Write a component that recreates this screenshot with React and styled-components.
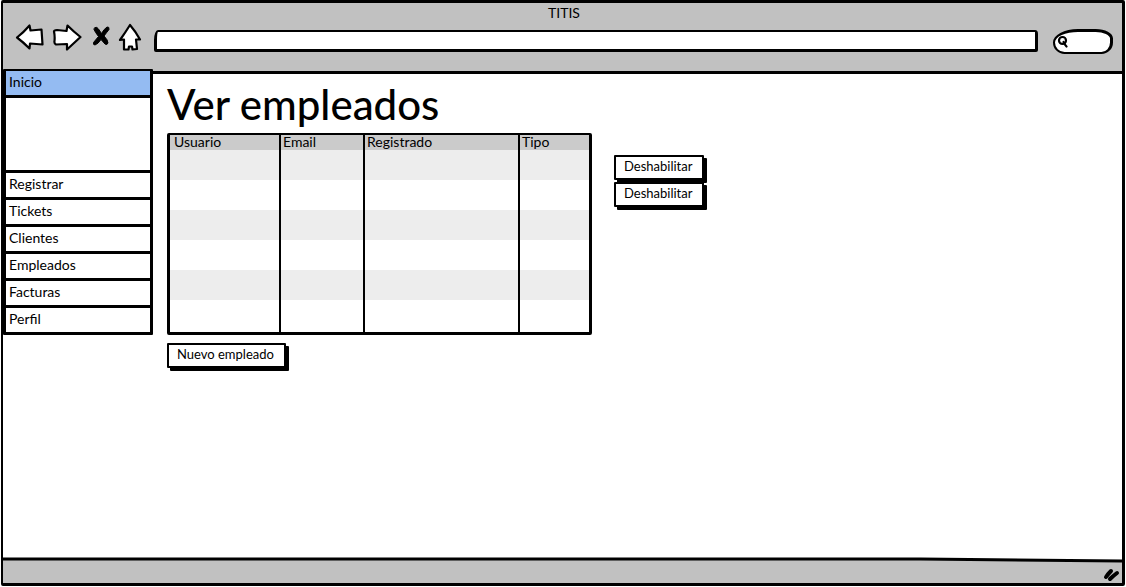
import React from "react";
import styled, { createGlobalStyle } from "styled-components";

const GlobalStyle = createGlobalStyle`
  *, *::before, *::after { box-sizing: border-box; }
  body {
    margin: 0;
    background: #fff;
    color: #000;
    font-family: Lato, "Noto Sans", sans-serif;
    font-size: 14px;
    line-height: 16px;
  }
  button, input { font: inherit; color: inherit; }
`;

const Frame = styled.div`
  display: flex;
  flex-direction: column;
  min-height: calc(100vh - 1px);
  margin: 0 1px 1px;
  border: 3px solid #000;
  border-left-width: 2px;
  border-radius: 2px;
`;

const Header = styled.header`
  padding: 2px 9px 18px 12px;
  background: #c1c1c1;
  border-bottom: 3px solid #000;
`;

const WindowTitle = styled.div`
  text-align: center;
`;

const Toolbar = styled.div`
  display: flex;
  align-items: center;
  height: 32px;
`;

const NavButtons = styled.div`
  display: flex;
  align-items: center;
  gap: 7px;
  margin-right: 12px;
`;

const IconButton = styled.button`
  display: flex;
  padding: 0;
  border: 0;
  background: none;
`;

const AddressBar = styled.input`
  flex: 1;
  min-width: 0;
  height: 22px;
  margin: 8px 15px 0 0;
  padding: 0 8px;
  background: #fff;
  border: 3px solid #000;
  border-width: 2px 3px 3px;
  border-radius: 4px 3px 2px 2px / 10px 4px 2px 2px;
`;

const SearchBox = styled.label`
  display: flex;
  align-items: center;
  width: 60px;
  height: 25px;
  margin-top: 8px;
  padding-left: 2px;
  background: #fff;
  border: 2px solid #000;
  border-width: 3px 3px 2px 2px;
  border-radius: 26px 18px 12px 12px / 14px 10px 12px 12px;
`;

const SearchInput = styled.input`
  flex: 1;
  min-width: 0;
  height: 16px;
  padding: 0;
  border: 0;
  outline: 0;
  background: none;
`;

const Body = styled.div`
  display: flex;
  flex: 1;
  align-items: flex-start;
`;

const Sidebar = styled.nav`
  flex: none;
  width: 150px;
  margin-top: -5px;
  background: #fff;
  border: 3px solid #000;
  border-top-width: 2px;
  border-radius: 1px;
`;

const NavLink = styled.a`
  display: block;
  height: 27px;
  padding: 3px;
  background: ${(p) => (p.$active ? "#94bbf2" : "#fff")};
  border-bottom: 3px solid #000;
  color: inherit;
  text-decoration: none;

  &:last-child {
    height: 24px;
    border-bottom: 0;
  }
`;

const SidebarGap = styled.div`
  height: 75px;
  border-bottom: 3px solid #000;
`;

const Main = styled.main`
  display: flex;
  align-items: flex-start;
  flex: 1;
  gap: 22px;
  padding: 6px 16px 16px 14px;
`;

const Employees = styled.section`
  width: 425px;
`;

const Title = styled.h1`
  margin: 0 0 5px;
  font-size: 42px;
  font-weight: 500;
  line-height: 48px;
  white-space: nowrap;
`;

const Table = styled.table`
  width: 100%;
  margin-bottom: 8px;
  table-layout: fixed;
  border: 3px solid #000;
  border-top-width: 2px;
  border-radius: 2px;
  border-spacing: 0;
`;

const HeadCell = styled.th`
  height: 15px;
  padding: 0 2px;
  background: #cbcbcb;
  font-weight: 400;
  line-height: 14px;
  text-align: left;
  vertical-align: top;

  &:first-child { padding-left: 4px; }
  & + & { border-left: 2px solid #000; }
`;

const Cell = styled.td`
  height: 30px;
  padding: 0 2px;

  & + & { border-left: 2px solid #000; }
`;

const Row = styled.tr`
  &:nth-child(odd) { background: #ededed; }
  &:last-child ${Cell} { height: 32px; }
`;

const Actions = styled.div`
  display: flex;
  flex-direction: column;
  gap: 2px;
  padding-top: 75px;
`;

const Button = styled.button`
  display: block;
  height: 25px;
  padding: 0 10px 4px 8px;
  background: #fff;
  border: 2px solid #000;
  border-radius: 1px;
  box-shadow: 3px 3px 0 #000;
  font-size: 13px;
  line-height: 16px;
  white-space: nowrap;
`;

const Footer = styled.footer`
  position: relative;
  display: flex;
  align-items: flex-end;
  justify-content: flex-end;
  height: 24px;
  padding: 0 2px;
  background: #c1c1c1;
`;

const FooterEdge = styled.svg`
  position: absolute;
  top: -2px;
  left: 0;
  width: 100%;
  height: 8px;
`;

const Drawing = ({ width, height, children }) => (
  <svg
    width={width}
    height={height}
    viewBox={`0 0 ${width} ${height}`}
    fill="#fff"
    stroke="#000"
    strokeWidth="2.2"
    strokeLinejoin="round"
    strokeLinecap="round"
    aria-hidden="true"
  >
    {children}
  </svg>
);

const links = ["Registrar", "Tickets", "Clientes", "Empleados", "Facturas", "Perfil"];
const columns = [
  { name: "Usuario", width: 109 },
  { name: "Email", width: 84 },
  { name: "Registrado", width: 155 },
  { name: "Tipo", width: 71 },
];
const rows = [1, 2, 3, 4, 5, 6];

const Column = styled.col`
  width: ${(p) => p.$width}px;
`;

export default function App() {
  return (
    <>
      <GlobalStyle />
      <Frame>
        <Header>
          <WindowTitle>TITIS</WindowTitle>
          <Toolbar>
            <NavButtons>
              <IconButton type="button" aria-label="Atrás">
                <Drawing width={30} height={28}>
                  <path d="M2 14.5 Q9 9 14.5 2.5 L15.5 7.5 L26.5 6.5 L27.5 21.5 L15 20.5 L14.5 25.5 Q8 19 2 14.5Z" />
                </Drawing>
              </IconButton>
              <IconButton type="button" aria-label="Adelante">
                <Drawing width={30} height={28}>
                  <path d="M2 8.5 Q2 7 5 7 L14.5 8 L15.5 2.5 Q22 9 28.5 14 Q22 20 15 26.5 L15 21 L4 21.5 Q2 20.5 2.5 18 Q3 13 2 8.5Z" />
                </Drawing>
              </IconButton>
              <IconButton type="button" aria-label="Detener">
                <Drawing width={22} height={28}>
                  <path fill="#000" strokeWidth="1" d="M6 4.5 Q8 3.5 9.5 6 L12.5 10.5 Q15 6 18 4 Q20.5 3.5 20 6.5 Q18 9 15 13 Q19 17 19 20 Q18 22.5 16 21 L12 16.5 Q9 21 6 22 Q4 22 4.5 19.5 L9.5 13.5 Q6 9 5 6.5Z" />
                </Drawing>
              </IconButton>
              <IconButton type="button" aria-label="Inicio">
                <Drawing width={24} height={28}>
                  <path d="M12 2 Q18 9 22 16.5 L18 16.5 L19 26 L14.5 26.5 L14 23.5 L11 23.5 L10.5 26.5 L6 26.5 L6 16.5 L2 17 Q7 10 12 2Z" />
                </Drawing>
              </IconButton>
            </NavButtons>
            <AddressBar type="text" aria-label="Dirección" />
            <SearchBox>
              <Drawing width={12} height={13}>
                <circle cx="5.5" cy="5.5" r="3.5" />
                <path fill="none" d="M6.5 7 Q8 10 9.5 11.5" />
              </Drawing>
              <SearchInput type="text" aria-label="Buscar" />
            </SearchBox>
          </Toolbar>
        </Header>
        <Body>
          <Sidebar>
            <NavLink href="#inicio" $active>Inicio</NavLink>
            <SidebarGap />
            {links.map((link) => (
              <NavLink key={link} href={`#${link.toLowerCase()}`}>{link}</NavLink>
            ))}
          </Sidebar>
          <Main>
            <Employees>
              <Title>Ver empleados</Title>
              <Table>
                <colgroup>
                  {columns.map((c) => <Column key={c.name} $width={c.width} />)}
                </colgroup>
                <thead>
                  <tr>
                    {columns.map((c) => <HeadCell key={c.name} scope="col">{c.name}</HeadCell>)}
                  </tr>
                </thead>
                <tbody>
                  {rows.map((r) => (
                    <Row key={r}>
                      {columns.map((c) => <Cell key={c.name} />)}
                    </Row>
                  ))}
                </tbody>
              </Table>
              <Button type="button">Nuevo empleado</Button>
            </Employees>
            <Actions>
              <Button type="button">Deshabilitar</Button>
              <Button type="button">Deshabilitar</Button>
            </Actions>
          </Main>
        </Body>
        <Footer>
          <FooterEdge viewBox="0 0 1000 8" preserveAspectRatio="none" aria-hidden="true">
            <path d="M0 0 H1000 V4 L900 2 H0Z" fill="#fff" />
            <path
              d="M0 2 H820 L1000 4"
              fill="none"
              stroke="#000"
              strokeWidth="3"
              vectorEffect="non-scaling-stroke"
            />
          </FooterEdge>
          <Drawing width={18} height={16}>
            <path strokeWidth="4" fill="none" d="M4 10 Q6 7 9 4 M8 12 Q11 9 15 6" />
          </Drawing>
        </Footer>
      </Frame>
    </>
  );
}
